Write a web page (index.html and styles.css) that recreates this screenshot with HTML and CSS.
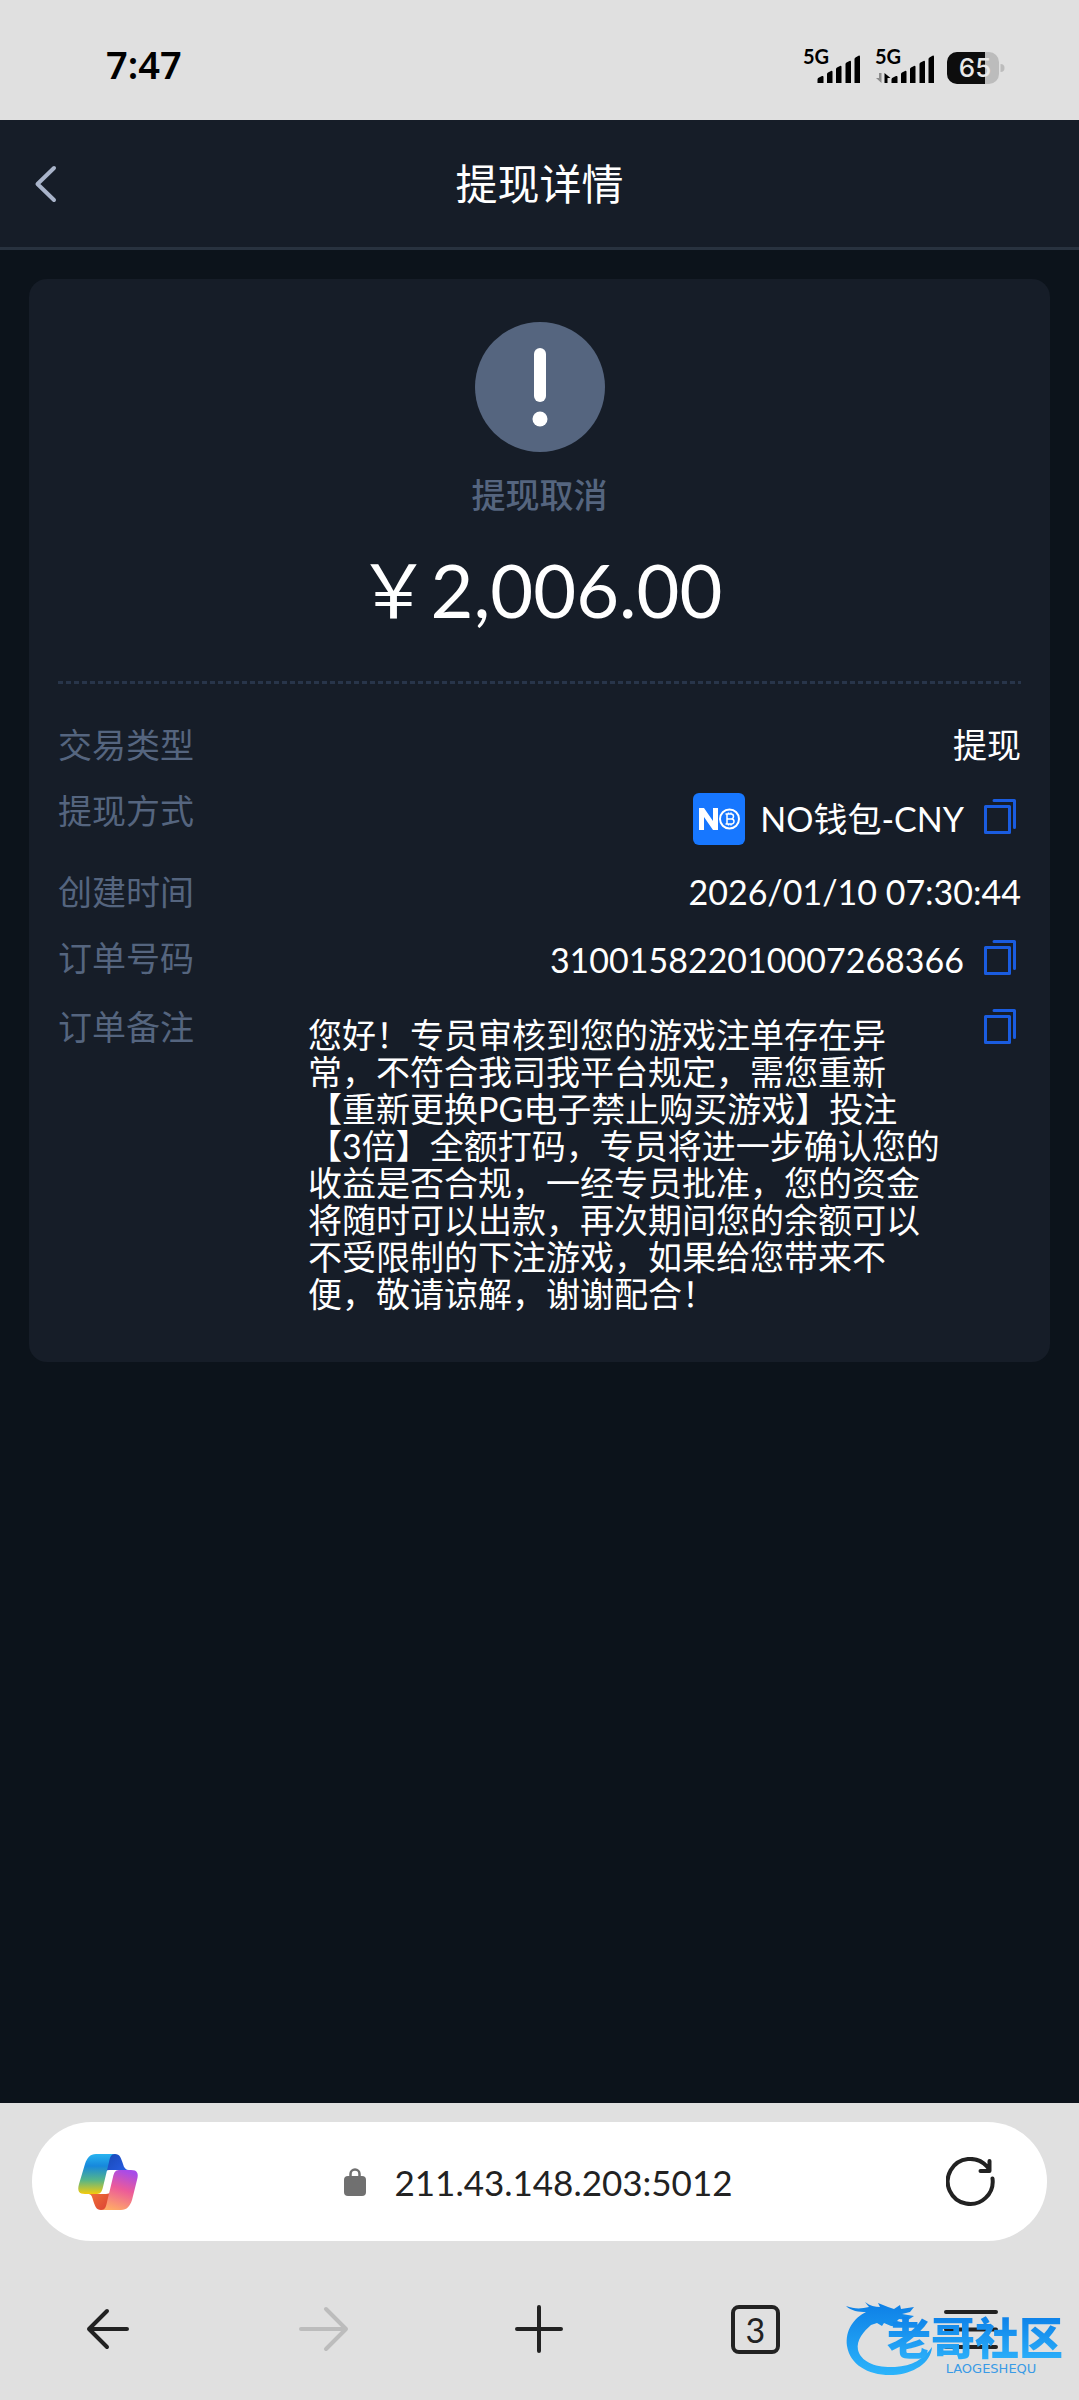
FILE: index.html
```html
<!DOCTYPE html>
<html lang="zh-CN">
<head>
<meta charset="utf-8">
<meta name="viewport" content="width=device-width, initial-scale=1">
<title>提现详情</title>
<link rel="stylesheet" href="styles.css">
</head>
<body>
<svg class="defs" width="0" height="0" aria-hidden="true">
  <defs>
    <symbol id="copy" viewBox="0 0 34 36">
      <path d="M2.5 8.500h24v26h-24z" fill="none" stroke="currentColor" stroke-width="3" stroke-linejoin="round"/>
      <path d="M11 2.500h20.500V29.500" fill="none" stroke="currentColor" stroke-width="3" stroke-linejoin="round" stroke-linecap="round"/>
    </symbol>
    <symbol id="bars" viewBox="0 0 44 28">
      <path d="M0.500 28v-3.500q0-1.500 1.500-2l3-1.500q1.500-.5 1.500 1v6zM10 28V19q0-1 1-1.500l3-1.500q1.500-.6 1.500 1V28zM19 28V14q0-1 1-1.500l3-1.500q1.500-.6 1.500 1V28zM28.500 28V9q0-1 1-1.500l3-1.500q1.500-.6 1.500 1V28zM37.500 28V4q0-1 1-1.500L41.500.700q1.500-.6 1.500 1V28z" fill="#000"/>
    </symbol>
  </defs>
</svg>
<div class="screen">
  <div class="status">
    <time class="status__time">7:47</time>
    <div class="status__icons">
      <div class="signal">
        <span class="signal__net">5G</span>
        <svg width="44" height="28" aria-hidden="true"><use href="#bars"/></svg>
      </div>
      <div class="signal">
        <span class="signal__net">5G</span>
        <svg width="60" height="28" viewBox="0 0 60 28" aria-hidden="true">
          <path d="M6.500 18v10L1 23h3v-5z" fill="#8c8c8c"/>
          <path d="M9.500 28V18l6 5h-3v5z" fill="#000"/>
          <use href="#bars" x="16" width="44" height="28"/>
        </svg>
      </div>
      <svg class="battery" width="58" height="32" viewBox="0 0 58 32" aria-label="电量 65%">
        <rect width="52" height="32" rx="10" fill="#bcbcbc"/>
        <path d="M38 0H10A10 10 0 0 0 0 10v12a10 10 0 0 0 10 10h28z" fill="#0d0d0d"/>
        <path d="M53.500 12q4 0 4 4t-4 4z" fill="#bcbcbc"/>
        <text class="pct" x="28" y="25" text-anchor="middle">65</text>
      </svg>
    </div>
  </div>

  <header class="topbar">
    <button class="topbar__back" type="button" aria-label="返回">
      <svg width="24" height="38" viewBox="0 0 24 38"><path d="M20 3 3.500 19 20 35" fill="none" stroke="#a9b4ca" stroke-width="4" stroke-linecap="round" stroke-linejoin="round"/></svg>
    </button>
    <h1 class="topbar__title">提现详情</h1>
  </header>

  <main class="content">
    <section class="card">
      <div class="summary">
        <svg width="130" height="130" viewBox="0 0 130 130" aria-hidden="true">
          <circle cx="65" cy="65" r="65" fill="#55657f"/>
          <rect x="59" y="26" width="12" height="54" rx="6" fill="#fff"/>
          <circle cx="65" cy="97" r="7.500" fill="#fff"/>
        </svg>
        <p class="summary__state">提现取消</p>
        <p class="summary__amount">￥2,006.00</p>
      </div>
      <dl class="details">
        <div class="row">
          <dt>交易类型</dt>
          <dd>提现</dd>
        </div>
        <div class="row row--wallet">
          <dt>提现方式</dt>
          <dd>
            <svg class="wallet" width="52" height="52" viewBox="0 0 52 52" aria-hidden="true">
              <rect width="52" height="52" rx="6" fill="#1777ff"/>
              <path d="M6 37V15h5l9 13V15h5v22h-5l-9-13v13z" fill="#fff"/>
              <circle cx="36.500" cy="26" r="9.500" fill="none" stroke="#fff" stroke-width="2"/>
              <path d="M34 21h4a2.400 2.400 0 0 1 0 5h-4zM34 26h4.500a2.500 2.500 0 0 1 0 5H34zM32.500 21h2M32.500 31h2M35.500 19.500V21M38 19.500V21M35.500 31v1.500M38 31v1.500" fill="none" stroke="#fff" stroke-width="1.500"/>
            </svg>
            <span>NO钱包-CNY</span>
            <button class="copy" type="button" aria-label="复制提现方式"><svg width="34" height="36"><use href="#copy"/></svg></button>
          </dd>
        </div>
        <div class="row">
          <dt>创建时间</dt>
          <dd>2026/01/10 07:30:44</dd>
        </div>
        <div class="row row--order">
          <dt>订单号码</dt>
          <dd>
            <span>310015822010007268366</span>
            <button class="copy" type="button" aria-label="复制订单号码"><svg width="34" height="36"><use href="#copy"/></svg></button>
          </dd>
        </div>
        <div class="row row--note">
          <dt>订单备注</dt>
          <dd>
            <p class="note">您好！专员审核到您的游戏注单存在异常，不符合我司我平台规定，需您重新【重新更换PG电子禁止购买游戏】投注【3倍】全额打码，专员将进一步确认您的收益是否合规，一经专员批准，您的资金将随时可以出款，再次期间您的余额可以不受限制的下注游戏，如果给您带来不便，敬请谅解，谢谢配合！</p>
            <button class="copy" type="button" aria-label="复制订单备注"><svg width="34" height="36"><use href="#copy"/></svg></button>
          </dd>
        </div>
      </dl>
    </section>
  </main>

  <footer class="browser">
    <div class="address">
      <button type="button" aria-label="Copilot">
        <svg width="62" height="58" viewBox="0 0 62 58">
          <defs>
            <linearGradient id="cool" x1="0" y1="0" x2="0" y2="1"><stop offset="0" stop-color="#28b4f0"/><stop offset=".3" stop-color="#1688dc"/><stop offset=".65" stop-color="#55b58a"/><stop offset="1" stop-color="#f5cb0c"/></linearGradient>
            <linearGradient id="warm" x1=".6" y1="0" x2=".3" y2="1"><stop offset="0" stop-color="#a84be8"/><stop offset=".45" stop-color="#ec5b99"/><stop offset="1" stop-color="#ffab66"/></linearGradient>
            <linearGradient id="blue" x1="0" y1="0" x2="1" y2="1"><stop offset="0" stop-color="#1746b0"/><stop offset="1" stop-color="#2b63f0"/></linearGradient>
            <linearGradient id="red" x1="0" y1="0" x2="1" y2="1"><stop offset="0" stop-color="#f58037"/><stop offset="1" stop-color="#d93a35"/></linearGradient>
          </defs>
          <path d="M30 1h8c5 0 6 4 8 10 1 4 3 6 6 6H32c-4 0-6 4-8 10z" fill="url(#blue)"/>
          <path d="M32 57h-8c-5 0-6-4-8-10-1-4-2-6-5-6h18c4 0 6-3 9-10z" fill="url(#red)"/>
          <path d="M38 1H19c-6 0-9 4-11 10L2 31c-2 7 0 10 6 10h12c4 0 5-3 6-7L32 9c1-5 2-8 6-8z" fill="url(#cool)"/>
          <path d="M24 57h20c6 0 9-4 11-10l5-20c2-7 0-10-6-10H42c-4 0-5 3-6 7L30 49c-1 5-2 8-6 8z" fill="url(#warm)"/>
        </svg>
      </button>
      <a class="address__url" href="#">
        <svg width="22" height="28" viewBox="0 0 22 28" aria-hidden="true"><rect y="8" width="22" height="20" rx="4" fill="#707070"/><path d="M6.500 10V6a4.500 4.500 0 0 1 9 0v4" fill="none" stroke="#707070" stroke-width="2.500"/></svg>
        <span>211.43.148.203:5012</span>
      </a>
      <button type="button" aria-label="刷新">
        <svg width="50" height="50" viewBox="0 0 50 50"><path d="M46.500 21.500A22.500 22.500 0 1 1 41 9.500L43 12M43.500 4v10H34.500" fill="none" stroke="#222" stroke-width="4" stroke-linecap="round" stroke-linejoin="round"/></svg>
      </button>
    </div>
    <nav class="tools">
      <button type="button" aria-label="后退"><svg width="50" height="50" viewBox="0 0 50 50"><path d="M44 25H6M24 7 6 25l18 18" fill="none" stroke="#222" stroke-width="4" stroke-linecap="round" stroke-linejoin="round"/></svg></button>
      <button type="button" aria-label="前进" disabled><svg width="50" height="50" viewBox="0 0 50 50"><path d="M2 25h45M27 5l20 20-20 20" fill="none" stroke="#bcbcbc" stroke-width="4" stroke-linecap="round" stroke-linejoin="round"/></svg></button>
      <button type="button" aria-label="新建标签页"><svg width="50" height="50" viewBox="0 0 50 50"><path d="M3 25h44M25 3v44" fill="none" stroke="#222" stroke-width="4" stroke-linecap="round"/></svg></button>
      <button class="tabs" type="button" aria-label="标签页"><span class="tabs__count">3</span></button>
      <button type="button" aria-label="菜单"><svg width="54" height="50" viewBox="0 0 54 50"><path d="M2 8h50M2 25.500h50M2 43h50" fill="none" stroke="#222" stroke-width="4" stroke-linecap="round"/></svg></button>
    </nav>
    <div class="brand">
      <svg class="brand__dragon" width="90" height="76" viewBox="0 0 90 76" aria-hidden="true">
        <defs><linearGradient id="sea" x1="0" y1="0" x2="0" y2="1"><stop offset="0" stop-color="#0d7fe6"/><stop offset="1" stop-color="#2cb4fb"/></linearGradient></defs>
        <path d="M1 5c8 3 15 3 23 1l-4-5c5 4 10 5 15 5l-2-4 10 4 6 2 6-4 1 4 13-2-4 5-8 2 12 2-6 4-9-1-2 2 12 3-6 3-12-1-7-3-2 3-5-3-6 2C19 30 11 39 13 49c3 12 18 18 37 17 17-1 29-8 37-20-1 16-19 27-39 28C24 75 5 64 2 45 0 29 9 17 21 11 14 11 6 10 1 5z" fill="url(#sea)"/>
      </svg>
      <div class="brand__text">
        <span class="brand__name">老哥社区</span>
        <span class="brand__latin">LAOGESHEQU</span>
      </div>
    </div>
  </footer>
</div>
</body>
</html>
```

FILE: styles.css
```css
* {
  box-sizing: border-box;
  margin: 0;
  padding: 0;
}

body {
  background: #0c131b;
  color: #fff;
  font-family: Lato, "Noto Sans CJK SC", sans-serif;
  font-size: 34px;
}

button {
  border: 0;
  background: none;
  color: inherit;
  font: inherit;
}

svg {
  display: block;
}

.defs {
  position: absolute;
}

.screen {
  display: flex;
  flex-direction: column;
  min-height: 100vh;
}

/* system status bar */
.status {
  display: flex;
  justify-content: space-between;
  align-items: center;
  height: 120px;
  padding: 8px 74px 0 106px;
  background: #e0e0e0;
  color: #000;
}

.status__time {
  font: 600 38px/50px "Noto Sans", sans-serif;
}

.status__icons {
  display: flex;
  gap: 14px;
}

/* network label stands above and to the left of its bars */
.signal {
  display: grid;
  width: 58px;
  height: 38px;
}

.signal > * {
  grid-area: 1 / 1;
}

.signal svg {
  place-self: end;
}

.signal__net {
  font: 700 20px/22px Lato, sans-serif;
}

.battery {
  margin-top: 7px;
}

.pct {
  fill: #e8e8e8;
  font: 500 26px Inter, sans-serif;
}

/* page header */
.topbar {
  display: grid;
  grid-template-columns: 100px 1fr 100px;
  align-items: center;
  height: 130px;
  border-bottom: 3px solid #28323f;
  background: #161d28;
}

.topbar__back {
  padding-left: 34px;
}

.topbar__title {
  font-size: 42px;
  font-weight: 400;
  line-height: 60px;
  text-align: center;
}

.content {
  flex: 1;
  padding: 29px;
}

.card {
  padding: 43px 29px 50px;
  border-radius: 18px;
  background: #161d28;
}

.summary {
  display: flex;
  flex-direction: column;
  align-items: center;
  padding-bottom: 41px;
}

.summary__state {
  margin-top: 18px;
  color: #55657f;
  font-weight: 500;
  line-height: 50px;
}

.summary__amount {
  margin-top: 20px;
  font-size: 74px;
  line-height: 100px;
}

/* 5px dashes with 3px gaps along the top edge */
.details {
  display: flex;
  flex-direction: column;
  gap: 16px;
  padding-top: 39px;
  background: repeating-linear-gradient(90deg, #28354a 0 5px, transparent 5px 8px) top / 100% 3px no-repeat;
}

.row {
  display: flex;
  justify-content: space-between;
  line-height: 50px;
}

.row dt {
  flex: none;
  color: #55657f;
}

.row dd {
  display: flex;
  align-items: center;
}

.row--wallet {
  min-height: 65px;
}

.row--order {
  min-height: 53px;
}

.wallet {
  margin-right: 15px;
}

.copy {
  flex: none;
  margin: 0 4px 6px 19px;
  color: #1a5ce0;
}

.row--note dd {
  align-items: flex-start;
  gap: 16px;
}

.row--note .copy {
  margin-top: 6px;
}

.note {
  max-width: 640px;
  margin-top: 14px;
  line-height: 37px;
}

/* browser chrome */
.browser {
  position: relative;
  height: 297px;
  padding: 19px 32px 0;
  background: #e0e0e0;
}

.address {
  display: flex;
  justify-content: space-between;
  align-items: center;
  height: 119px;
  padding: 0 51px 0 45px;
  border-radius: 60px;
  background: #fff;
}

.address__url {
  display: flex;
  align-items: center;
  gap: 28px;
  padding-right: 8px;
  color: #222;
  font-size: 35px;
  text-decoration: none;
}

.tools {
  display: grid;
  grid-template-columns: repeat(5, 1fr);
  justify-items: center;
  align-items: center;
  height: 100px;
  margin: 38px -32px 0;
}

.tabs {
  width: 49px;
  height: 49px;
  border: 4px solid #222;
  border-radius: 8px;
  color: #222;
  line-height: 41px;
}

/* site mark lying over the menu button */
.brand {
  position: absolute;
  right: 16px;
  bottom: 23px;
  display: flex;
}

.brand__dragon {
  margin-right: -48px;
}

.brand__text {
  display: flex;
  flex-direction: column;
  padding-top: 14px;
}

.brand__name {
  background: linear-gradient(#0d80e8, #2cb0fa);
  background-clip: text;
  color: transparent;
  font-size: 44px;
  font-weight: 900;
  line-height: 46px;
}

.brand__latin {
  padding-left: 32px;
  color: #3a9be6;
  font: 13px/16px "DejaVu Sans", sans-serif;
  text-align: center;
}
```
